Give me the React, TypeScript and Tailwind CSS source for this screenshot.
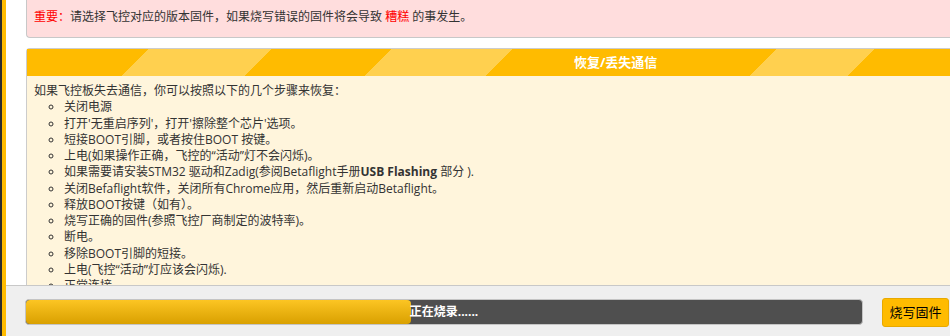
import React from 'react';

const steps: React.ReactNode[] = [
  '关闭电源',
  "打开'无重启序列'，打开'擦除整个芯片'选项。",
  '短接BOOT引脚，或者按住BOOT 按键。',
  '上电(如果操作正确，飞控的“活动”灯不会闪烁)。',
  <>
    如果需要请安装STM32 驱动和Zadig(参阅Betaflight手册<b className="font-bold">USB Flashing</b> 部分 ).
  </>,
  '关闭Befaflight软件，关闭所有Chrome应用，然后重新启动Betaflight。',
  '释放BOOT按键（如有）。',
  '烧写正确的固件(参照飞控厂商制定的波特率)。',
  '断电。',
  '移除BOOT引脚的短接。',
  '上电(飞控“活动”灯应该会闪烁).',
  '正常连接',
];

const App = () => {
  return (
    <div className="flex w-[950px] h-[336px] overflow-hidden bg-white text-[12px] text-[#333] font-['Open_Sans','Noto_Sans_CJK_SC',sans-serif]">
      {/* left edge strips */}
      <div className="w-[2px] shrink-0 bg-[#2b2b2b]" />
      <div className="w-[4px] shrink-0 bg-[#ffbb00]" />

      <div className="flex flex-col flex-1 min-w-0">
        {/* scrolling content */}
        <div className="h-[285px] overflow-hidden pl-[20px]">
          <div className="h-[38px] bg-[#ffdddd] border-l border-b border-[#c8c8c8] rounded-bl-[4px] pl-[7px] pt-[9px] leading-[16px]">
            <span className="text-[#ff0000]">重要：</span>请选择飞控对应的版本固件，如果烧写错误的固件将会导致{' '}
            <span className="text-[#ff0000]">糟糕</span> 的事发生。
          </div>

          <div className="mt-[10px] border-t border-l border-[#cccccc] rounded-tl-[4px] bg-[#fff5dc]">
            <div className="h-[27px] flex items-center pl-[547px] text-[13px] font-bold text-white bg-[linear-gradient(135deg,#ffbb00_0px,#ffbb00_86px,#ffd04f_86px,#ffd04f_173px,#ffbb00_173px,#ffbb00_258px,#ffd04f_258px,#ffd04f_343px,#ffbb00_343px,#ffbb00_530px,#ffd04f_530px,#ffd04f_599px,#ffbb00_599px)]">
              恢复/丢失通信
            </div>
            <div className="pl-[7px] pt-[7px] leading-[16.25px]">
              <p>如果飞控板失去通信，你可以按照以下的几个步骤来恢复：</p>
              <ul className="list-[circle] pl-[30px]">
                {steps.map((s, i) => (
                  <li key={i}>{s}</li>
                ))}
              </ul>
            </div>
          </div>
        </div>

        {/* bottom toolbar */}
        <div className="flex-1 flex items-start border-t border-[#c8c8c8] bg-[#efefef] pl-[19px] pr-[1px] pt-[12px]">
          <div className="relative flex-1 h-[26px] mt-[1px] rounded-[4px] border border-[#c4c4c4] bg-[#4f4f4f] overflow-hidden">
            <div className="h-full w-[46%] rounded-[4px] bg-[linear-gradient(to_bottom,#fcc523,#d9a000)]" />
            <div className="absolute inset-0 flex items-center justify-center text-white font-bold text-[12px]">
              正在烧录......
            </div>
          </div>
          <button className="ml-[19px] w-[67px] h-[29px] rounded-[3px] border border-[#e8a900] bg-[#ffbb00] text-[13px] text-black">
            烧写固件
          </button>
        </div>
      </div>
    </div>
  );
};

export default App;
